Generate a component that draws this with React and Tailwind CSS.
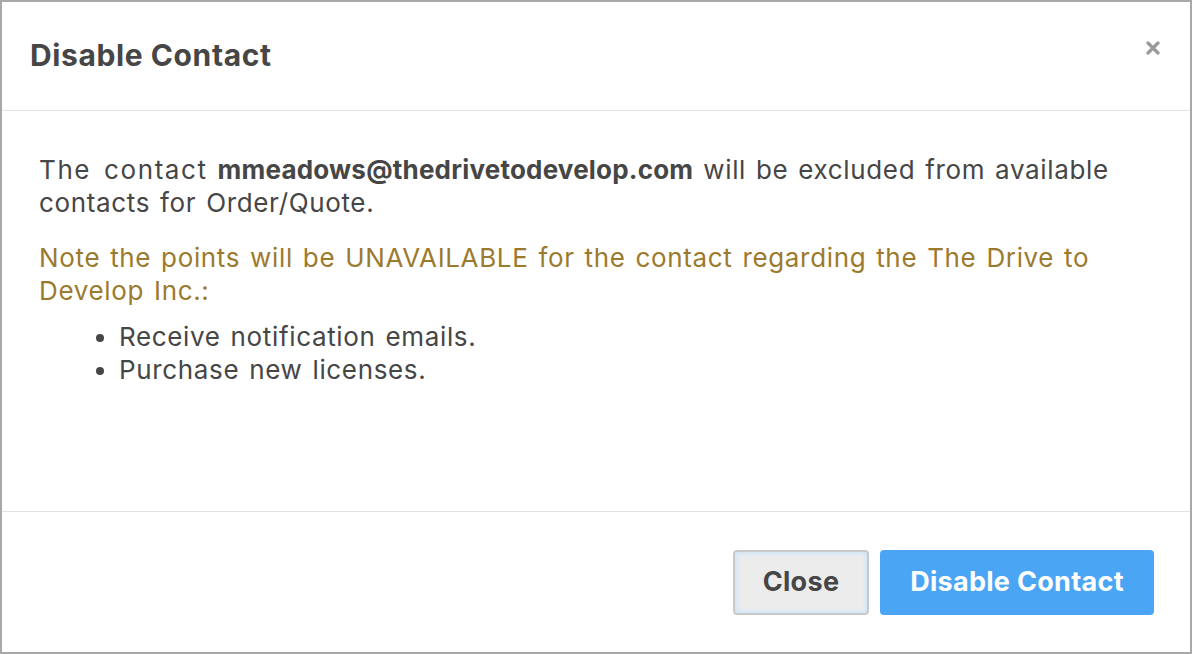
export default function App() {
  return (
    <div className="w-[1192px] h-[654px] bg-white border-2 border-[#a8a8a8] flex flex-col text-[#464646]" style={{ fontFamily: 'Inter, "Noto Sans", sans-serif' }}>
      <div className="h-[109px] shrink-0 flex items-center justify-between pl-[28px] pr-[30px] border-b border-[#e3e3e3]">
        <h1 className="text-[30px] font-bold tracking-[0.6px] text-[#464646] -mt-[2px]">Disable Contact</h1>
        <button className="text-[#9a9a9a] -mt-[16px]">
          <svg width="14" height="14" viewBox="0 0 14 14"><path d="M2 2L12 12M12 2L2 12" stroke="currentColor" strokeWidth="3.2" strokeLinecap="round" /></svg>
        </button>
      </div>
      <div className="flex-1 pl-[37px] pr-[30px] pt-[42px] text-[26px] leading-[33px] tracking-[0.65px] [word-spacing:2px]">
        <p><span className="tracking-[1.6px] [word-spacing:4px]">The contact</span> <b className="font-bold tracking-[0.2px] [word-spacing:0px]">mmeadows@thedrivetodevelop.com</b> will be excluded from available contacts for Order/Quote.</p>
        <p className="mt-[22px] text-[#9c7a2d]">Note the points will be UNAVAILABLE for the contact regarding the The Drive to Develop Inc.:</p>
        <ul className="list-disc pl-[80px] mt-[13px]">
          <li>Receive notification emails.</li>
          <li>Purchase new licenses.</li>
        </ul>
      </div>
      <div className="h-[141px] shrink-0 border-t border-[#e3e3e3] flex items-center justify-end gap-[11px] pr-[36px]">
        <button className="h-[65px] w-[136px] rounded-[4px] bg-[#ececec] border-2 border-[#c9c9c9] shadow-[inset_0_0_4px_2px_#cfe6fa] text-[27px] font-bold tracking-[0.3px] text-[#464646]">Close</button>
        <button className="h-[65px] w-[274px] rounded-[4px] bg-[#4ba5f5] text-[27px] font-bold tracking-[0.3px] text-white">Disable Contact</button>
      </div>
    </div>
  );
}
